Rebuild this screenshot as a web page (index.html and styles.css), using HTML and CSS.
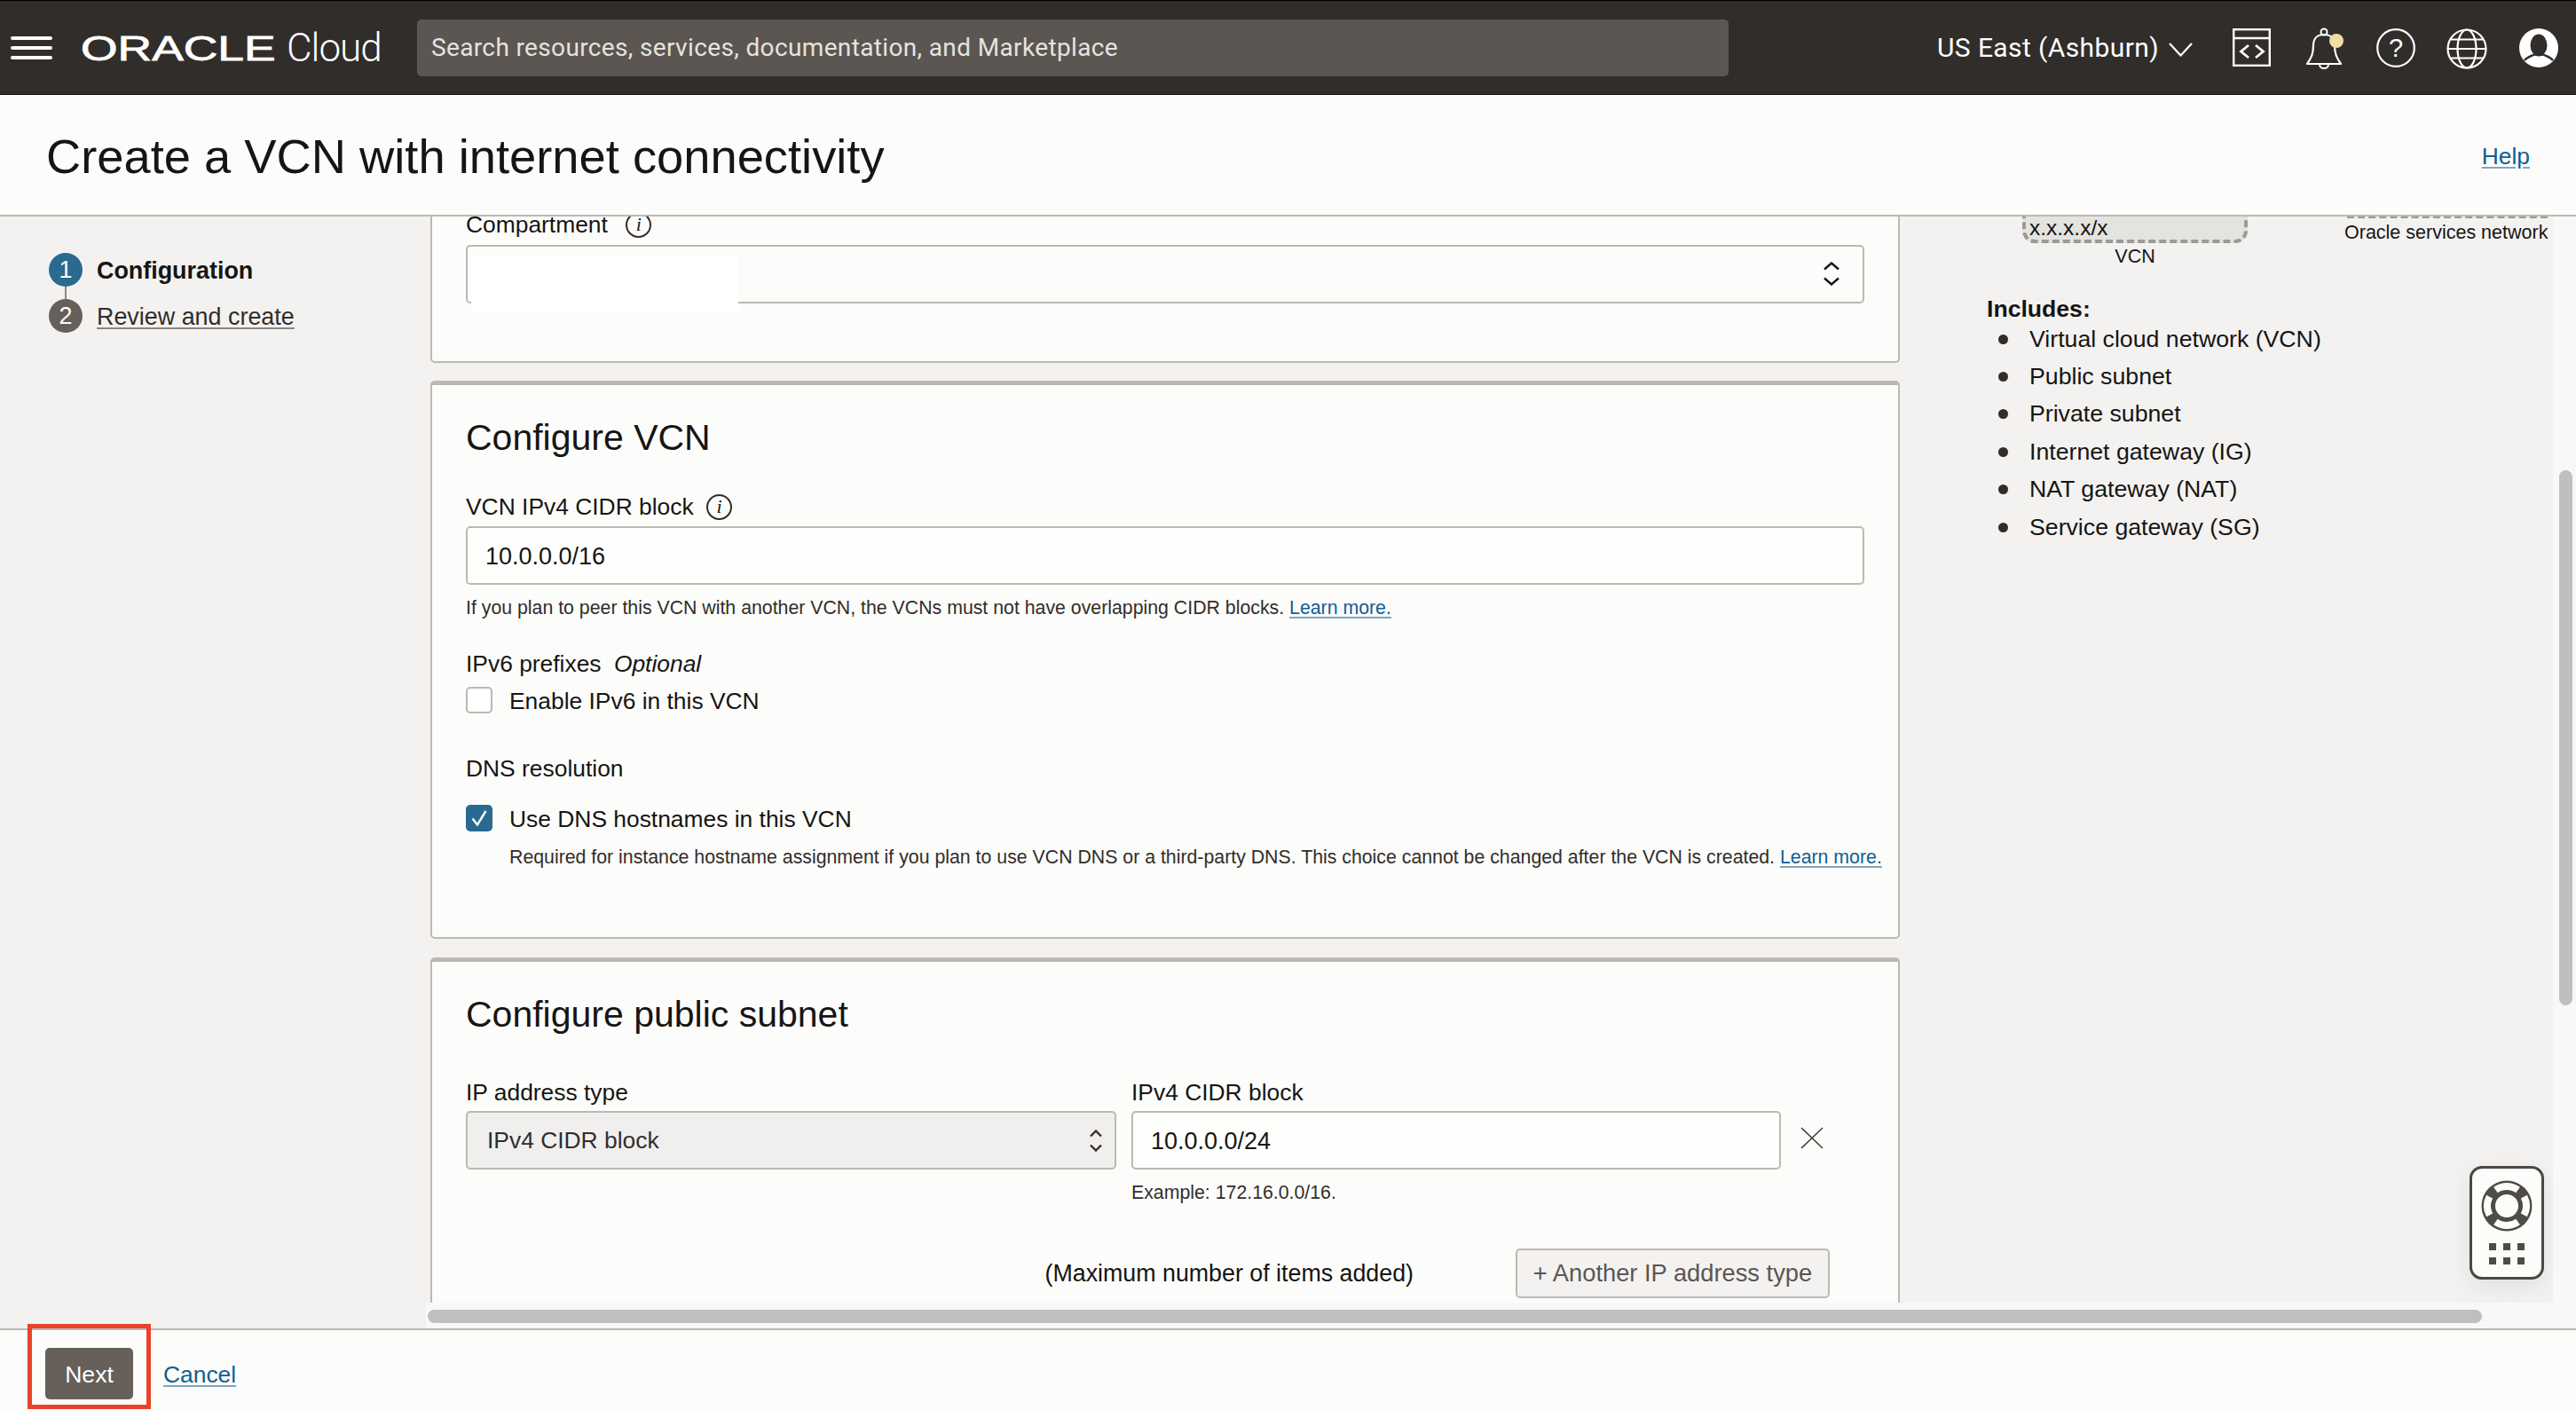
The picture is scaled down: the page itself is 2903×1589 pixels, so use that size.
FILE: index.html
```html
<!DOCTYPE html>
<html lang="en">
<head>
  <meta charset="UTF-8" />
  <meta name="viewport" content="width=device-width, initial-scale=1.0"/>
  <title>Create a VCN with internet connectivity</title>
  <link rel="stylesheet" href="styles.css">
</head>
<body>
  <header class="topbar">
    <svg class="burger" width="47" height="28" viewBox="0 0 47 28">
      <path d="M2 3h43M2 14h43M2 25h43" stroke="#fff" stroke-width="4" stroke-linecap="round"/>
    </svg>
    <div class="logo">
      <span class="wordmark">ORACLE</span>
      <span class="cloud">Cloud</span>
    </div>
    <div class="search">Search resources, services, documentation, and Marketplace</div>
    <div class="region">US East (Ashburn)</div>
    <svg class="region-caret" width="27" height="16" viewBox="0 0 27 16">
      <path d="M1 1l12.5 13.5L26 1" fill="none" stroke="#fff" stroke-width="2.2"/>
    </svg>
    <svg class="icon icon-code" width="43" height="43" viewBox="0 0 43 43">
      <rect x="1.2" y="1.2" width="40.6" height="40.6" fill="none" stroke="#fff" stroke-width="2.4"/>
      <path d="M1 11h41" stroke="#fff" stroke-width="2.4"/>
      <path d="M18 19l-8.500 7 8.500 7M26 19l8.500 7-8.500 7" fill="none" stroke="#fff" stroke-width="2.8"/>
    </svg>
    <svg class="icon icon-bell" width="48" height="50" viewBox="0 0 48 50">
      <circle cx="23" cy="5" r="3.500" fill="none" stroke="#fff" stroke-width="2"/>
      <path d="M4 41c5-7 7-12 7-21 0-8 5-12 12-12s12 4 12 12c0 9 2 14 7 21z" fill="none" stroke="#fff" stroke-width="2.200" stroke-linejoin="round"/>
      <path d="M18 41.500c0 6 10 6 10 0" fill="none" stroke="#fff" stroke-width="2"/>
      <circle cx="37" cy="15" r="8" fill="#f1dca3"/>
    </svg>
    <svg class="icon icon-help" width="44" height="44" viewBox="0 0 44 44">
      <circle cx="22" cy="22" r="20.800" fill="none" stroke="#fff" stroke-width="2.200"/>
      <text x="22" y="32" text-anchor="middle" class="help-mark">?</text>
    </svg>
    <svg class="icon icon-globe" width="46" height="46" viewBox="0 0 46 46">
      <circle cx="23" cy="23" r="21.500" fill="none" stroke="#fff" stroke-width="2.200"/>
      <ellipse cx="23" cy="23" rx="10.500" ry="21.500" fill="none" stroke="#fff" stroke-width="2.200"/>
      <path d="M5 12.500h36M2 23h42M5 33.500h36" fill="none" stroke="#fff" stroke-width="2.200"/>
    </svg>
    <svg class="icon icon-user" width="44" height="44" viewBox="0 0 44 44">
      <circle cx="22" cy="22" r="22" fill="#fff"/>
      <ellipse cx="22" cy="19" rx="9.500" ry="12.500" fill="#312d2a"/>
      <path d="M6 36c3-4 8-5 11-6.500h10c3 1.500 8 2.500 11 6.500" fill="none" stroke="#312d2a" stroke-width="2.500"/>
    </svg>
  </header>

  <div class="titlebar">
    <h1>Create a VCN with internet connectivity</h1>
    <a class="link" href="#">Help</a>
  </div>

  <div class="work">
    <nav class="sidebar">
      <div class="step step-current"><span class="step-no">1</span><span class="step-name">Configuration</span></div>
      <div class="step"><span class="step-no">2</span><a class="step-name" href="#">Review and create</a></div>
    </nav>

    <div class="main">
      <div class="panes">
        <div class="form-col">
          <section class="card card-scrolled">
            <div class="label">Compartment <span class="info">i</span></div>
            <div class="select">
              <span class="redacted"></span>
              <svg class="updown" width="18" height="27" viewBox="0 0 18 27">
                <path d="M1 8.500l8-7 8 7M1 18.500l8 7 8-7" fill="none" stroke="#161513" stroke-width="2.400"/>
              </svg>
            </div>
          </section>

          <section class="card">
            <h2>Configure VCN</h2>
            <div class="label label-first">VCN IPv4 CIDR block <span class="info">i</span></div>
            <input class="text-input" type="text" value="10.0.0.0/16">
            <p class="hint">If you plan to peer this VCN with another VCN, the VCNs must not have overlapping CIDR blocks. <a class="link" href="#">Learn more.</a></p>
            <div class="label label-group">IPv6 prefixes <em>Optional</em></div>
            <div class="check-row"><span class="check"></span>Enable IPv6 in this VCN</div>
            <div class="label label-dns">DNS resolution</div>
            <div class="check-row check-row-dns">
              <span class="check check-on">
                <svg width="20" height="20" viewBox="0 0 20 20"><path d="M2.500 10.500l5.500 7L17.500 2" fill="none" stroke="#fff" stroke-width="2.400"/></svg>
              </span>
              Use DNS hostnames in this VCN
            </div>
            <p class="hint hint-indent">Required for instance hostname assignment if you plan to use VCN DNS or a third-party DNS. This choice cannot be changed after the VCN is created. <a class="link" href="#">Learn more.</a></p>
          </section>

          <section class="card card-last">
            <h2>Configure public subnet</h2>
            <div class="subnet-grid">
              <div>
                <div class="label">IP address type</div>
                <div class="select select-disabled">
                  IPv4 CIDR block
                  <svg class="updown updown-small" width="16" height="25" viewBox="0 0 16 25">
                    <path d="M2 7.500l6-6 6 6M2 17.500l6 6 6-6" fill="none" stroke="#33302d" stroke-width="2.400"/>
                  </svg>
                </div>
              </div>
              <div>
                <div class="label">IPv4 CIDR block</div>
                <input class="text-input" type="text" value="10.0.0.0/24">
                <p class="hint">Example: 172.16.0.0/16.</p>
              </div>
              <svg class="remove" width="26" height="25" viewBox="0 0 26 25">
                <path d="M1 1l24 23M25 1L1 24" stroke="#45413d" stroke-width="1.600"/>
              </svg>
            </div>
            <div class="add-row">
              <span class="add-note">(Maximum number of items added)</span>
              <span class="btn-add">+ Another IP address type</span>
            </div>
          </section>
        </div>

        <aside class="side-info">
          <div class="diagram">
            <div class="vcn-box">x.x.x.x/x</div>
            <div class="vcn-name">VCN</div>
            <div class="osn-box"></div>
            <div class="osn-name">Oracle services network</div>
          </div>
          <div class="includes">Includes:</div>
          <ul class="include-list">
            <li>Virtual cloud network (VCN)</li>
            <li>Public subnet</li>
            <li>Private subnet</li>
            <li>Internet gateway (IG)</li>
            <li>NAT gateway (NAT)</li>
            <li>Service gateway (SG)</li>
          </ul>
          <div class="help-widget">
            <svg width="60" height="60" viewBox="-30 -30 60 60">
              <circle r="28.500" fill="#4f4c48"/>
              <path d="M-12.600-18A22 22 0 0 1 12.600-18M-12.600 18A22 22 0 0 0 12.600 18M-19.400-10.300A22 22 0 0 0-19.400 10.300M19.400-10.300A22 22 0 0 1 19.400 10.300" fill="none" stroke="#fcfcfb" stroke-width="8"/>
              <circle r="14" fill="#fcfcfb" stroke="#4f4c48" stroke-width="2"/>
            </svg>
            <div class="dots"><i></i><i></i><i></i><i></i><i></i><i></i></div>
          </div>
        </aside>

        <div class="vscroll"><div class="vthumb"></div></div>
      </div>
      <div class="hscroll"><div class="hthumb"></div></div>
    </div>
  </div>

  <footer class="footer">
    <button class="btn-next" type="button">Next</button>
    <a class="link cancel" href="#">Cancel</a>
    <div class="callout"></div>
  </footer>
</body>
</html>
```

FILE: styles.css
```css
* {
  box-sizing: border-box;
}

html, body {
  height: 100%;
}

body {
  margin: 0;
  height: 1589px;
  display: flex;
  flex-direction: column;
  overflow: hidden;
  background: #fcfcfb;
  color: #161513;
  font-family: "Liberation Sans", Arial, sans-serif;
  font-size: 26.400px;
}

.link {
  color: #0f6090;
  text-decoration: underline;
  text-decoration-color: #7fa6c0;
  text-underline-offset: 3px;
}

/* top bar */
.topbar {
  flex: none;
  height: 107px;
  display: flex;
  align-items: center;
  background: #312d2a;
  border-top: 1px solid #000;
  border-bottom: 1px solid #111;
  color: #fff;
}

.burger {
  margin-left: 12px;
  flex: none;
}

.logo {
  width: 379px;
  margin-left: 32px;
  display: flex;
  align-items: center;
}

.wordmark {
  width: 232px;
  margin-top: 2px;
  font-size: 39px;
  line-height: 1;
  -webkit-text-stroke: 0.8px #fff;
  transform: scaleX(1.37);
  transform-origin: left center;
}

.cloud {
  font-family: Roboto, "Liberation Sans", sans-serif;
  font-weight: 300;
  font-size: 44px;
  letter-spacing: -1px;
}

.search {
  width: 1478px;
  height: 64px;
  padding-left: 16px;
  display: flex;
  align-items: center;
  background: #5b5652;
  border-radius: 5px;
  color: #e6e3df;
  font-family: Roboto, "Liberation Sans", sans-serif;
  font-size: 28px;
  letter-spacing: 0.36px;
  flex: none;
}

.region {
  margin-left: 235px;
  font-family: Roboto, "Liberation Sans", sans-serif;
  font-size: 30px;
  letter-spacing: 0.4px;
  flex: none;
}

.region-caret {
  margin-left: 11px;
  margin-top: 4px;
  flex: none;
}

.icon {
  flex: none;
}

.icon-code {
  margin-left: 45px;
}

.icon-bell {
  margin-left: 37px;
  margin-top: 4px;
}

.icon-help {
  margin-left: 34px;
}

.icon-globe {
  margin-left: 35px;
  margin-top: 2px;
}

.icon-user {
  margin-left: 36px;
}

.help-mark {
  fill: #fff;
  font-size: 29px;
  font-family: "Liberation Sans", sans-serif;
}

/* page title */
.titlebar {
  flex: none;
  height: 137px;
  padding: 3px 52px 0;
  display: flex;
  align-items: center;
  justify-content: space-between;
  border-bottom: 2px solid #bdb8b2;
}

h1 {
  margin: 0;
  font-size: 54.300px;
  font-weight: 400;
}

/* work area */
.work {
  flex: 1;
  min-height: 0;
  display: flex;
}

.sidebar {
  flex: none;
  width: 480px;
  padding: 41px 0 0 55px;
  display: flex;
  flex-direction: column;
  gap: 14px;
  background: #f3f2f1;
  font-size: 26.900px;
}

.step {
  position: relative;
  height: 38px;
  display: flex;
  align-items: center;
  gap: 16px;
}

.step-name {
  margin-top: 2px;
}

.step a {
  color: #312d2a;
  text-decoration: underline;
  text-decoration-color: #8b8580;
  text-underline-offset: 3px;
}

.step + .step::before {
  content: "";
  position: absolute;
  left: 18px;
  top: -14px;
  width: 2px;
  height: 14px;
  background: #8b8580;
}

.step-current {
  font-weight: 700;
}

.step-no {
  width: 38px;
  height: 38px;
  border-radius: 50%;
  display: flex;
  align-items: center;
  justify-content: center;
  background: #665f5a;
  color: #fff;
  font-weight: 400;
}

.step-current .step-no {
  background: #2a6a90;
}

.main {
  flex: 1;
  min-width: 0;
  display: flex;
  flex-direction: column;
}

.panes {
  flex: none;
  height: 1224px;
  display: flex;
  overflow: hidden;
}

.form-col {
  flex: none;
  width: 1661px;
  padding-left: 5px;
  overflow: hidden;
  background: #f3f2f1;
}

.card {
  margin-top: 20px;
  padding: 35px 38px 76px 38px;
  background: #fcfcfb;
  border: 2px solid #bdb8b2;
  border-top-width: 5px;
  border-radius: 5px;
}

.card-scrolled {
  margin-top: 0;
  padding-top: 0;
  padding-bottom: 65px;
  border-top: 0;
  border-radius: 0 0 5px 5px;
}

.card-last {
  margin-top: 21px;
  padding-bottom: 40px;
}

h2 {
  margin: 0;
  font-size: 41px;
  line-height: 48px;
  font-weight: 400;
}

.label {
  height: 32px;
  line-height: 32px;
  display: flex;
  align-items: center;
  gap: 7px;
  white-space: pre;
}

.label-first {
  margin-top: 38px;
  margin-bottom: 6px;
}

.label-group {
  margin-top: 33px;
}

.label-dns {
  margin-top: 44px;
}

/* scrolled under the title bar, so the label starts right at the edge */
.card-scrolled .label {
  height: 18px;
  line-height: 18px;
  margin-bottom: 14px;
  gap: 13px;
}

.info {
  width: 29px;
  height: 29px;
  flex: none;
  display: inline-flex;
  align-items: center;
  justify-content: center;
  border: 2px solid #312d2a;
  border-radius: 50%;
  font-family: "Liberation Serif", serif;
  font-style: italic;
  font-size: 22px;
}

.select {
  position: relative;
  height: 66px;
  padding-left: 22px;
  display: flex;
  align-items: center;
  background: #fcfcfb;
  border: 2px solid #bdb8b2;
  border-radius: 5px;
}

.select-disabled {
  margin-top: 5px;
  background: #f0efee;
  color: #312d2a;
}

.redacted {
  position: absolute;
  left: 4px;
  top: 9px;
  width: 301px;
  height: 65px;
  background: #fff;
}

.updown {
  position: absolute;
  right: 26px;
  top: 17px;
}

.updown-small {
  right: 13px;
  top: 19px;
}

.text-input {
  display: block;
  width: 100%;
  height: 66px;
  padding: 2px 20px 0;
  border: 2px solid #bdb8b2;
  border-radius: 5px;
  background: #fefefd;
  color: #161513;
  font-family: inherit;
  font-size: 27px;
  outline: none;
}

.hint {
  margin: 12px 0 0;
  font-size: 21.300px;
  line-height: 28px;
  color: #312d2a;
  white-space: nowrap;
}

.hint-indent {
  margin-top: 13px;
  margin-left: 49px;
}

.check-row {
  height: 32px;
  margin-top: 10px;
  display: flex;
  align-items: flex-start;
  gap: 19px;
  line-height: 32px;
}

.check-row-dns {
  margin-top: 25px;
}

.check {
  width: 30px;
  height: 30px;
  flex: none;
  border: 2px solid #bdb8b2;
  border-radius: 5px;
  background: #fff;
}

.check-on {
  display: flex;
  align-items: center;
  justify-content: center;
  background: #2a6a90;
  border-color: #2a6a90;
}

.subnet-grid {
  margin-top: 48px;
  display: grid;
  grid-template-columns: 733px 732px 26px;
  column-gap: 17px;
}

.remove {
  margin-top: 55px;
  margin-left: 5px;
}

.subnet-grid .text-input {
  margin-top: 5px;
}

.add-row {
  margin-top: 49px;
  margin-right: 39px;
  display: flex;
  align-items: center;
  justify-content: flex-end;
  gap: 115px;
}

.add-note {
  font-size: 26.800px;
}

.btn-add {
  width: 354px;
  height: 56px;
  display: flex;
  align-items: center;
  justify-content: center;
  background: #f3f2f1;
  border: 2px solid #bdb8b2;
  border-radius: 5px;
  color: #5b5652;
  font-size: 27.300px;
}

/* right column */
.side-info {
  position: relative;
  flex: none;
  width: 736px;
  padding-left: 98px;
  background: #f3f2f1;
  overflow: hidden;
}

.diagram {
  position: relative;
  height: 90px;
  margin-left: -98px;
  font-size: 21.500px;
}

.vcn-box {
  position: absolute;
  left: 138px;
  top: -30px;
  width: 254px;
  height: 60px;
  padding: 26px 0 0 4px;
  font-size: 24.500px;
  line-height: 26px;
  background: #e4e3e0;
  border: 4px dashed #9a9a96;
  border-radius: 14px;
}

.vcn-name {
  position: absolute;
  left: 138px;
  top: 32px;
  width: 254px;
  text-align: center;
  line-height: 26px;
}

.osn-box {
  position: absolute;
  left: 504px;
  top: -2px;
  width: 226px;
  height: 4px;
  border-bottom: 4px dashed #9a9a96;
}

.osn-name {
  position: absolute;
  left: 501px;
  top: 5px;
  line-height: 26px;
  white-space: nowrap;
}

.includes {
  font-weight: 700;
  line-height: 28px;
  font-size: 26.600px;
}

.include-list {
  margin: -1px 0 0;
  padding: 0;
  list-style: none;
  font-size: 26.700px;
}

.include-list li {
  height: 42.400px;
  display: flex;
  align-items: center;
  gap: 24px;
}

.include-list li::before {
  content: "";
  width: 11px;
  height: 11px;
  margin-left: 13px;
  border-radius: 50%;
  background: #312d2a;
}

.help-widget {
  position: absolute;
  left: 642px;
  top: 1070px;
  width: 84px;
  height: 128px;
  padding-top: 12px;
  display: flex;
  flex-direction: column;
  align-items: center;
  background: #fcfcfb;
  border: 3px solid #4a4744;
  border-radius: 14px;
  box-shadow: 0 8px 28px rgba(0, 0, 0, 0.08);
}

.dots {
  margin-top: 12px;
  display: grid;
  grid-template-columns: repeat(3, 8px);
  gap: 8px;
}

.dots i {
  height: 8px;
  background: #4f4c48;
}

/* scrollbars */
.vscroll {
  flex: none;
  width: 26px;
  padding: 286px 0 0 7px;
  background: #f8f8f8;
}

.vthumb {
  width: 15px;
  height: 603px;
  background: #bfbfbf;
  border-radius: 8px;
}

.hscroll {
  flex: 1;
  padding: 8px 0 0 2px;
  background: #f8f8f8;
}

.hthumb {
  width: 2315px;
  height: 15px;
  background: #bfbfbf;
  border-radius: 8px;
}

/* footer */
.footer {
  position: relative;
  flex: none;
  height: 92px;
  padding: 20px 0 0 51px;
  display: flex;
  align-items: flex-start;
  gap: 34px;
  border-top: 2px solid #bdb8b2;
}

.btn-next {
  width: 99px;
  height: 58px;
  padding: 2px 0 0;
  background: #665f5a;
  border: 0;
  border-radius: 5px;
  color: #fff;
  font-family: inherit;
  font-size: 26.600px;
}

.cancel {
  margin-top: 15px;
}

.callout {
  position: absolute;
  left: 31px;
  top: -7px;
  width: 139px;
  height: 96px;
  border: 5px solid #e8432a;
}
```
